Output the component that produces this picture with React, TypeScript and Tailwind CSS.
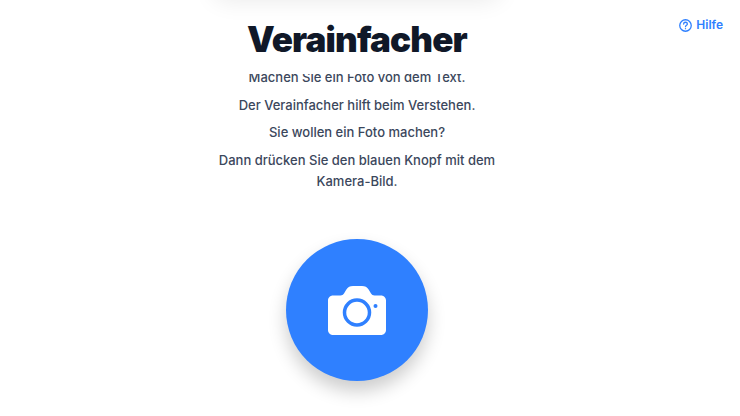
import React from "react";

const lines = [
  "Machen Sie ein Foto von dem Text.",
  "Der Verainfacher hilft beim Verstehen.",
  "Sie wollen ein Foto machen?",
  "Dann drücken Sie den blauen Knopf mit dem Kamera-Bild.",
];

const CameraIcon = () => (
  <svg width="58" height="50" viewBox="0 0 58 50" fill="none">
    <path
      d="M5 10.500h7.500c1.600 0 2.700-.7 3.500-2l2.200-3.800C20 2.100 22 1 25 1h9c3 0 5 1.100 6.800 3.700L43 8.500c.8 1.300 1.900 2 3.500 2H53c2.800 0 5 2.200 5 5V45c0 2.800-2.200 5-5 5H5c-2.800 0-5-2.200-5-5V15.500c0-2.800 2.200-5 5-5z"
      fill="#fff"
    />
    <circle cx="29" cy="27.500" r="12.500" stroke="#2f80ff" strokeWidth="3.500" />
    <circle cx="47.500" cy="21" r="2" fill="#2f80ff" />
  </svg>
);

const HelpIcon = () => (
  <svg width="13" height="13" viewBox="0 0 14 14" fill="none" stroke="#2f80ff" strokeWidth="1.400" strokeLinecap="round">
    <circle cx="7" cy="7" r="6.200" />
    <path d="M5 5.400c0-1.200 1-1.900 2-1.900s2 .7 2 1.800c0 1.500-2 1.500-2 3" />
    <path d="M7 10.300v.1" />
  </svg>
);

export default function App() {
  return (
    <main className="relative flex h-[416px] w-[740px] flex-col items-center overflow-hidden bg-white pr-[26px] font-['Inter',sans-serif]">
      <div className="absolute -top-[30px] left-[214px] h-[30px] w-[286px] rounded-b-xl shadow-[0_0_24px_rgba(0,0,0,0.09)]" />

      <button className="absolute right-[17px] top-[17px] flex items-center gap-[4px] text-[12px] font-semibold leading-4 text-[#2f80ff]">
        <HelpIcon />
        <span>Hilfe</span>
      </button>

      <h1 className="mt-[18px] text-[35px] font-black leading-[42px] tracking-[-0.85px] text-[#101828]">
        Verainfacher
      </h1>

      <div className="mt-[14px] h-[118px] w-[300px] shrink-0 overflow-hidden">
        <div className="-mt-[7px] flex flex-col gap-[6.500px] text-center text-[13px] font-medium leading-[21px] text-[#3b475c]">
          {lines.map((line) => (
            <p key={line}>{line}</p>
          ))}
        </div>
      </div>

      <button className="mt-[47px] flex h-[142px] w-[142px] shrink-0 items-center justify-center rounded-full bg-[#2f80ff] shadow-[0_10px_18px_rgba(0,0,0,0.2)]">
        <CameraIcon />
      </button>
    </main>
  );
}
